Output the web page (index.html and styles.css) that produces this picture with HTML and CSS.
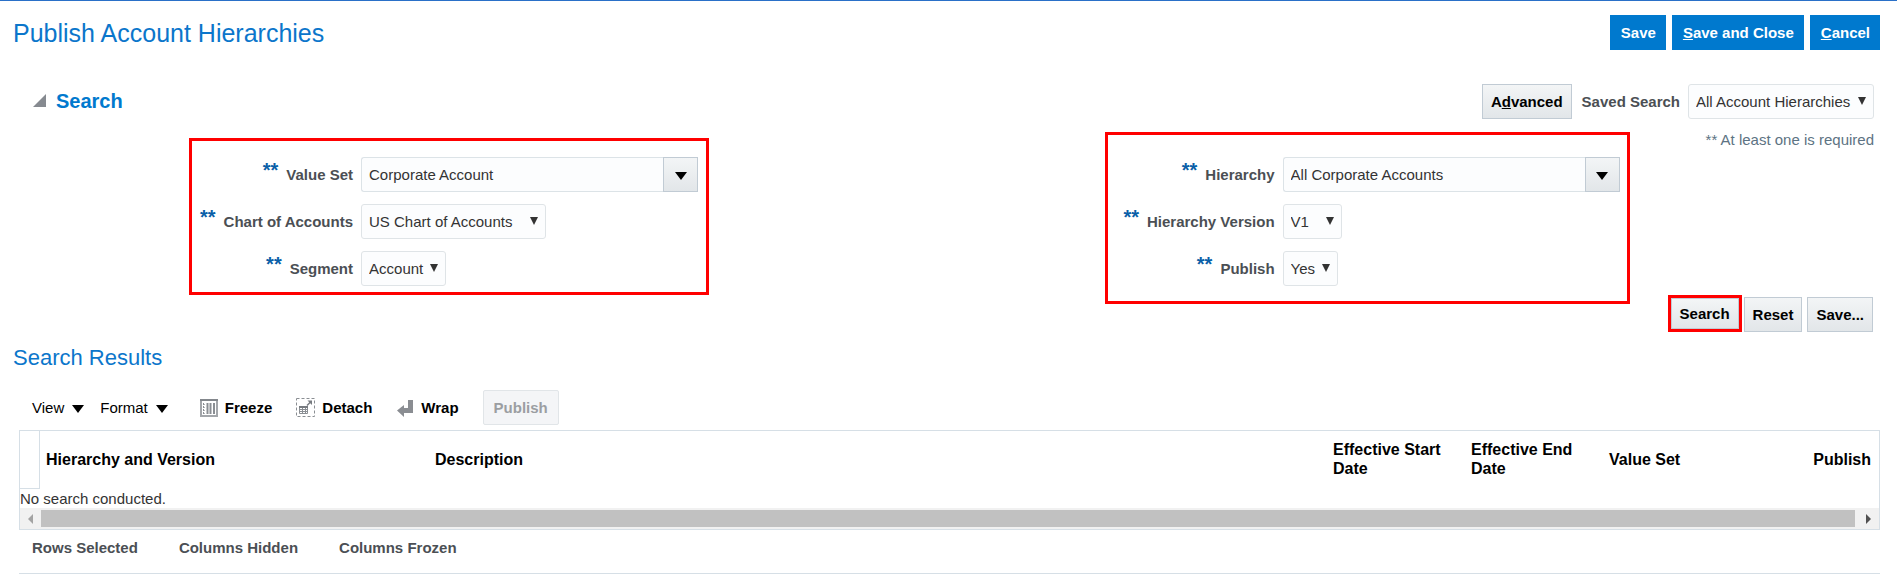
FILE: index.html
```
<!DOCTYPE html>
<html lang="en">

<head>
  <meta charset="UTF-8" />
  <meta name="viewport" content="width=device-width, initial-scale=1.0" />
  <title>Publish Account Hierarchies</title>
  <link rel="stylesheet" href="styles.css">
</head>

<body>
  <!-- page title and main actions -->
  <header class="page-header">
    <h1>Publish Account Hierarchies</h1>
    <div class="actions">
      <button class="btn-primary">Save</button>
      <button class="btn-primary"><u>S</u>ave and Close</button>
      <button class="btn-primary"><u>C</u>ancel</button>
    </div>
  </header>

  <!-- search panel -->
  <section class="search">
    <div class="search-head">
      <svg class="disclose" width="15" height="14" viewBox="0 0 15 14"><path d="M14 0v13H1z" fill="#868a90" /></svg>
      <h2>Search</h2>
      <button class="btn">A<u>d</u>vanced</button>
      <label class="saved-label" for="saved">Saved Search</label>
      <span class="select">
        <select id="saved"><option>All Account Hierarchies</option></select>
      </span>
    </div>

    <div class="criteria">
      <div class="fields fields-left">
        <label for="valueSet"><span class="stars">**</span>Value Set</label>
        <div class="combo">
          <input type="text" id="valueSet" value="Corporate Account">
          <button aria-label="Search: Value Set"><i class="caret"></i></button>
        </div>
        <label for="chart"><span class="stars">**</span>Chart of Accounts</label>
        <span class="select wide">
          <select id="chart"><option>US Chart of Accounts</option></select>
        </span>
        <label for="segment"><span class="stars">**</span>Segment</label>
        <span class="select">
          <select id="segment"><option>Account</option></select>
        </span>
      </div>

      <div class="fields fields-right">
        <label for="hierarchy"><span class="stars">**</span>Hierarchy</label>
        <div class="combo">
          <input type="text" id="hierarchy" value="All Corporate Accounts">
          <button aria-label="Search: Hierarchy"><i class="caret"></i></button>
        </div>
        <label for="version"><span class="stars">**</span>Hierarchy Version</label>
        <span class="select wide">
          <select id="version"><option>V1</option></select>
        </span>
        <label for="publish"><span class="stars">**</span>Publish</label>
        <span class="select">
          <select id="publish"><option>Yes</option></select>
        </span>
      </div>

      <p class="hint">** At least one is required</p>
    </div>

    <div class="search-buttons">
      <span class="marked"><button class="btn">Search</button></span>
      <button class="btn">Reset</button>
      <button class="btn">Save...</button>
    </div>
  </section>

  <!-- results -->
  <section class="results">
    <h2>Search Results</h2>
    <div class="toolbar">
      <button class="menu">View<i class="caret"></i></button>
      <button class="menu">Format<i class="caret"></i></button>
      <button class="tool tool-first">
        <svg width="18" height="18" viewBox="0 0 18 18">
          <rect x="1" y="1" width="16" height="16" fill="#fff" stroke="#a3a6aa" stroke-width="2" />
          <path d="M0 1h18" stroke="#83878c" stroke-width="2" />
          <path d="M3.500 4v11" stroke="#8a8e93" stroke-dasharray="2 1" />
          <path d="M4.500 5v10" stroke="#b5b8bb" stroke-dasharray="1 2" />
          <path d="M7.500 4v11M10.500 4v11M14 4v11" stroke="#8a8e93" stroke-width="2" />
        </svg>
        Freeze
      </button>
      <button class="tool">
        <svg width="19" height="19" viewBox="0 0 19 19" fill="none">
          <rect x="0.500" y="0.500" width="18" height="18" stroke="#8a8e93" stroke-dasharray="3 2" />
          <path d="M3.500 8.500h8v7h-8zM3.500 11.500h8M3.500 13.500h8M6.500 9v6M9.500 9v6" stroke="#8a8e93" />
          <path d="M3 9h9" stroke="#777b80" stroke-width="2" />
          <path d="M11 7.500l4-4" stroke="#777b80" stroke-width="1.500" />
          <path d="M11.500 2.500H16V7z" fill="#777b80" />
        </svg>
        Detach
      </button>
      <button class="tool">
        <svg width="18" height="18" viewBox="0 0 18 18"><path d="M12 1h5v13H8v4L1 11.500 8 6v3h4z" fill="#8a8d92" /></svg>
        Wrap
      </button>
      <button class="btn-disabled" disabled>Publish</button>
    </div>

    <div class="grid">
      <table>
        <thead>
          <tr>
            <th class="col-pick"></th>
            <th class="col-name">Hierarchy and Version</th>
            <th>Description</th>
            <th class="col-small">Effective Start Date</th>
            <th class="col-small">Effective End Date</th>
            <th class="col-small">Value Set</th>
            <th class="col-small col-end">Publish</th>
          </tr>
        </thead>
        <tbody>
          <tr>
            <td colspan="7">No search conducted.</td>
          </tr>
        </tbody>
      </table>
      <div class="scrollbar">
        <span class="arrow arrow-left"></span>
        <span class="thumb"></span>
        <span class="arrow arrow-right"></span>
      </div>
    </div>
    <div class="status">
      <span>Rows Selected</span>
      <span>Columns Hidden</span>
      <span>Columns Frozen</span>
    </div>
  </section>
</body>

</html>
```
FILE: styles.css
```
* {
  margin: 0;
  padding: 0;
  box-sizing: border-box;
}

body {
  border-top: 1px solid #2a70c8;
  background: #fff;
  color: #333;
  font: 15px/18px "Liberation Sans", Arial, sans-serif;
}

button,
input,
select {
  font: inherit;
  color: inherit;
}

h1,
.results h2 {
  color: #0b76cb;
  font-weight: normal;
}

/* header */
.page-header {
  display: flex;
  justify-content: space-between;
  padding: 14px 17px 0 13px;
}

h1 {
  font-size: 25px;
  line-height: 36px;
}

.actions {
  display: flex;
  gap: 6px;
}

.btn-primary {
  height: 35px;
  padding: 0 10px 0 11px;
  border: none;
  background: #0079ce;
  color: #fff;
  font-weight: bold;
}

.btn {
  height: 35px;
  padding: 0 8px;
  border: 1px solid #c1cbd4;
  background: linear-gradient(#f3f5f6, #e2e6e9);
  color: #000;
  font-weight: bold;
}

/* search */
.search-head {
  display: flex;
  align-items: center;
  padding: 33px 23px 0 32px;
}

.search-head h2 {
  margin: 0 auto 0 9px;
  padding-bottom: 2px;
  color: #0079ce;
  font-size: 20px;
}

.disclose {
  margin-bottom: 2px;
}

.saved-label {
  margin: 0 8px 0 10px;
  color: #4b4f54;
  font-weight: bold;
}

.select {
  position: relative;
  justify-self: start;
}

.select select {
  display: block;
  height: 35px;
  padding: 0 21px 0 7px;
  border: 1px solid #dfe4e7;
  border-radius: 3px;
  background: #fcfdfe;
  appearance: none;
}

.wide select {
  padding-right: 31px;
}

.select::after {
  content: '';
  position: absolute;
  top: 13px;
  right: 8px;
  border: 4px solid transparent;
  border-top: 8px solid #333;
  border-bottom: none;
  pointer-events: none;
}

.criteria {
  display: flex;
  align-items: flex-start;
  padding: 13px 23px 0 189px;
}

.fields {
  display: grid;
  grid-template-columns: auto auto;
  gap: 12px 8px;
  align-items: center;
  border: 3px solid #f00;
}

.fields-left {
  margin: 6px auto 0 0;
  padding: 16px 8px 6px;
}

.fields-right {
  margin-right: 76px;
  padding: 22px 7px 15px 15px;
}

.fields label {
  color: #4b4f54;
  font-weight: bold;
  text-align: right;
}

.stars {
  margin-right: 8px;
  color: #0a5fa8;
  font-size: 20px;
  line-height: 0;
  vertical-align: 3px;
}

.combo {
  display: flex;
}

.combo input {
  width: 302px;
  height: 35px;
  padding: 0 7px;
  border: 1px solid #dce3e7;
  border-right: none;
  border-radius: 3px 0 0 3px;
  background: #fcfdfe;
}

.combo button {
  width: 35px;
  border: 1px solid #c1cbd4;
  background: linear-gradient(#f3f5f6, #e2e6e9);
}

.caret {
  display: inline-block;
  border: 6px solid transparent;
  border-top: 8px solid #000;
  border-bottom: none;
}

.hint {
  margin-top: -1px;
  color: #5d7383;
}

.search-buttons {
  display: flex;
  justify-content: flex-end;
  gap: 5px;
  margin-top: -9px;
  padding-right: 24px;
}

.search-buttons .btn {
  margin-top: 2px;
}

.search-buttons .marked {
  margin-right: -3px;
  border: 3px solid #f00;
}

.search-buttons .marked .btn {
  display: block;
  height: 31px;
  margin: 0;
  padding: 0 8px;
}

/* results */
.results {
  padding: 12px 17px 0 19px;
}

.results h2 {
  margin-left: -6px;
  font-size: 22px;
  line-height: 28px;
}

.toolbar {
  display: flex;
  align-items: center;
  padding: 18px 0 5px 13px;
}

.menu,
.tool {
  display: flex;
  align-items: center;
  border: none;
  background: none;
  color: #000;
}

.menu {
  gap: 8px;
  margin-right: 16px;
}

.menu .caret {
  margin-top: 2px;
}

.tool {
  gap: 7px;
  margin-right: 24px;
  font-weight: bold;
}

.tool-first {
  margin-left: 16px;
}

.btn-disabled {
  height: 35px;
  padding: 0 10px;
  border: 1px solid #e1e5e8;
  border-radius: 2px;
  background: #f4f5f7;
  color: #9b9ea2;
  font-weight: bold;
}

.grid {
  border: 1px solid #d6dfe6;
}

.grid table {
  width: 100%;
  border-spacing: 0;
  table-layout: fixed;
}

.grid th {
  height: 58px;
  padding: 0 6px 2px;
  color: #000;
  font-size: 16px;
  line-height: 19px;
  text-align: left;
}

.grid .col-pick {
  width: 20px;
  padding: 0;
  border-right: 1px solid #d6dfe6;
  border-bottom: 1px solid #d6dfe6;
}

.col-name {
  width: 389px;
}

.col-small {
  width: 138px;
}

.grid .col-end {
  padding-right: 8px;
  text-align: right;
}

.grid td {
  height: 19px;
}

.scrollbar {
  display: flex;
  height: 21px;
  padding: 2px 0;
  background: #f1f1f1;
}

.thumb {
  flex: 1;
  background: #c1c1c1;
}

.arrow {
  align-self: center;
  border: 5px solid transparent;
}

.arrow-left {
  margin: 0 8px 0 8px;
  border-right-color: #a3a3a3;
  border-left: none;
}

.arrow-right {
  margin: 0 8px 0 11px;
  border-left-color: #505050;
  border-right: none;
}

.status {
  display: flex;
  gap: 41px;
  padding: 9px 13px 16px;
  border-bottom: 1px solid #d6dfe6;
  color: #4b4f54;
  font-weight: bold;
}
```
